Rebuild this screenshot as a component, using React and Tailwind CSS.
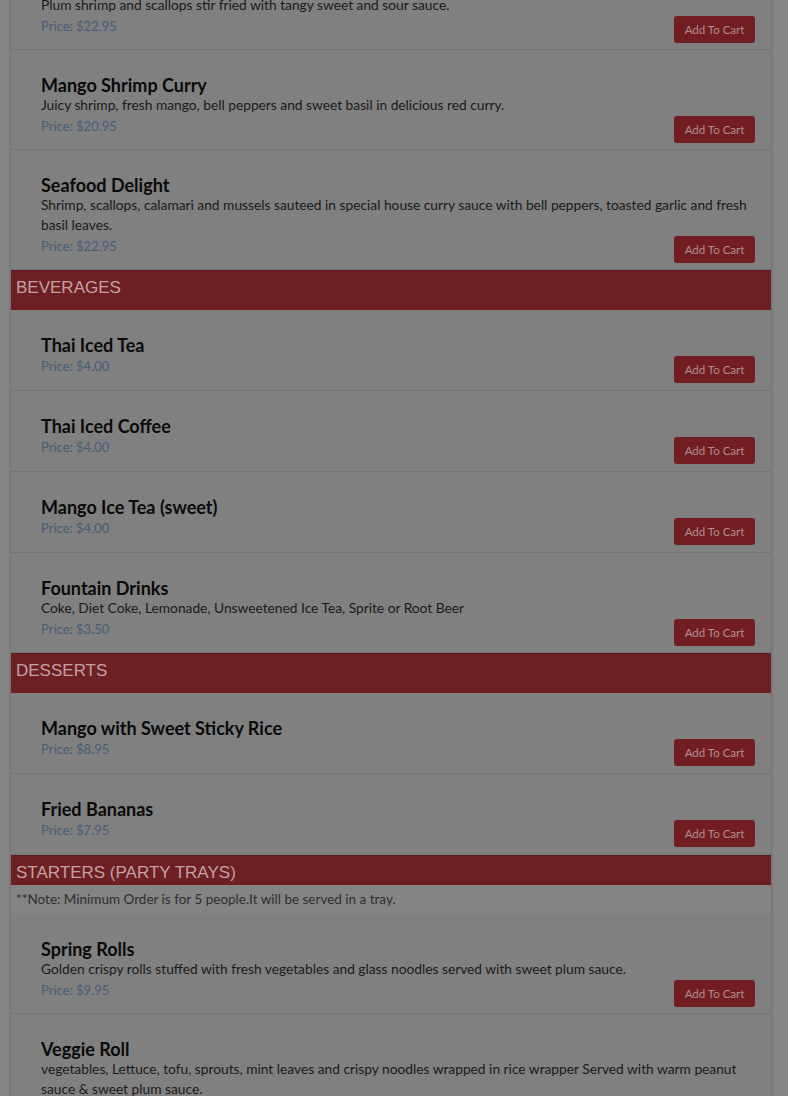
import React from 'react';

const sections = [
  {
    name: null,
    items: [
      { title: 'Plum Shrimp & Scallops', desc: 'Plum shrimp and scallops stir fried with tangy sweet and sour sauce.', price: '22.95' },
      { title: 'Mango Shrimp Curry', desc: 'Juicy shrimp, fresh mango, bell peppers and sweet basil in delicious red curry.', price: '20.95' },
      { title: 'Seafood Delight', desc: 'Shrimp, scallops, calamari and mussels sauteed in special house curry sauce with bell peppers, toasted garlic and fresh basil leaves.', price: '22.95' },
    ],
  },
  {
    name: 'BEVERAGES',
    items: [
      { title: 'Thai Iced Tea', price: '4.00' },
      { title: 'Thai Iced Coffee', price: '4.00' },
      { title: 'Mango Ice Tea (sweet)', price: '4.00' },
      { title: 'Fountain Drinks', desc: 'Coke, Diet Coke, Lemonade, Unsweetened Ice Tea, Sprite or Root Beer', price: '3.50' },
    ],
  },
  {
    name: 'DESSERTS',
    items: [
      { title: 'Mango with Sweet Sticky Rice', price: '8.95' },
      { title: 'Fried Bananas', price: '7.95' },
    ],
  },
  {
    name: 'STARTERS (PARTY TRAYS)',
    note: '**Note: Minimum Order is for 5 people.It will be served in a tray.',
    items: [
      { title: 'Spring Rolls', desc: 'Golden crispy rolls stuffed with fresh vegetables and glass noodles served with sweet plum sauce.', price: '9.95' },
      { title: 'Veggie Roll', desc: 'vegetables, Lettuce, tofu, sprouts, mint leaves and crispy noodles wrapped in rice wrapper Served with warm peanut sauce & sweet plum sauce.', price: '6.95' },
    ],
  },
];

const font = { fontFamily: 'Lato, "Open Sans", sans-serif' };

const Item = ({ item }) => (
  <div className={`border-b border-[#747474] pt-6 pl-[30px] pr-4 ${item.desc ? 'pb-1.5' : 'pb-[7px]'}`}>
    <h3 className="text-[18px] leading-[22px] font-bold text-[#0a0a0a]">{item.title}</h3>
    {item.desc && <p className="-mt-px mb-px text-[13.75px] leading-5 text-[#1a1a1a]">{item.desc}</p>}
    <div className="flex justify-between items-start">
      <span className="text-[13px] leading-5 text-[#4a5d77]">Price: ${item.price}</span>
      <button className="h-[27px] w-[81px] rounded-[3px] bg-[#721d22] text-[11.5px] text-[#b28e8e]">Add To Cart</button>
    </div>
  </div>
);

const App = () => {
  return (
    <div className="min-h-screen bg-[#878787] overflow-hidden" style={font}>
      <div className="ml-[10px] w-[762px] -mt-[50px] bg-[#808080] border-x border-[#767676] shadow-[0_0_4px_rgba(0,0,0,0.15)]">
        {sections.map((s, i) => (
          <div key={i}>
            {s.name && (
              <div className="bg-[#6e1f24] border-t border-[#5e1a1e]">
                <h2
                  className={`pl-[5px] pt-[7px] text-[17px] leading-5 text-[#c2a2a4] ${s.note ? 'pb-[2px]' : 'pb-[12px]'}`}
                  style={{ fontFamily: '"Liberation Sans", Arial, sans-serif' }}
                >
                  {s.name}
                </h2>
              </div>
            )}
            {s.note && (
              <div className="bg-[#848484] pl-[5px] h-[29px] flex items-center text-[13.5px] text-[#2e2e2e]">
                {s.note}
              </div>
            )}
            {s.items.map((item, j) => (
              <Item key={j} item={item} />
            ))}
          </div>
        ))}
      </div>
    </div>
  );
};

export default App;
